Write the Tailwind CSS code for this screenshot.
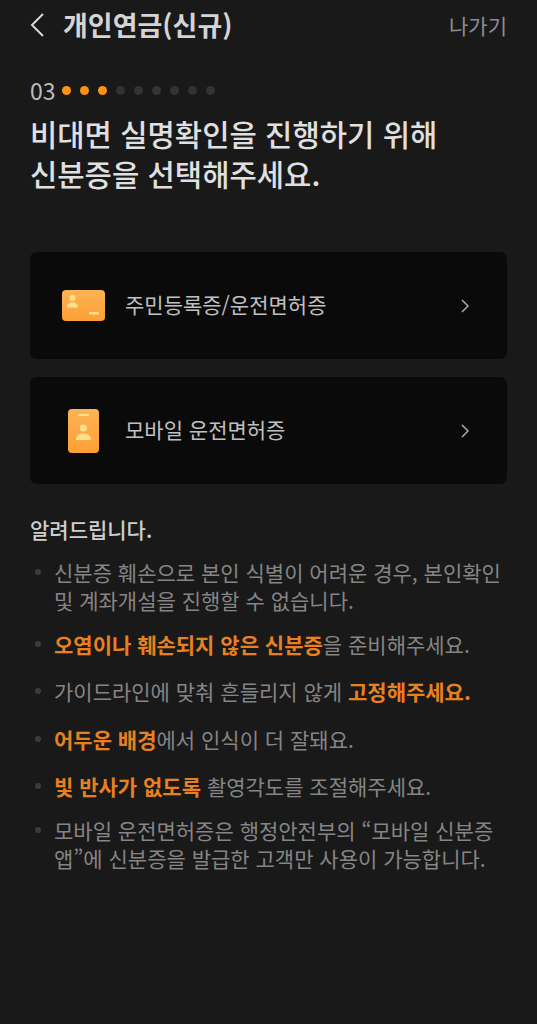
<!DOCTYPE html>
<html lang="ko">
<head>
  <meta charset="UTF-8">
  <meta name="viewport" content="width=device-width, initial-scale=1.0">
  <title>개인연금(신규)</title>
  <script src="https://cdn.jsdelivr.net/npm/@tailwindcss/browser@4"></script>
</head>
<body class="bg-[#191919] font-['Noto_Sans_CJK_KR','Noto_Sans',sans-serif]">
  <div class="w-[537px] h-[1024px] overflow-hidden px-[30px]">

    <!-- header -->
    <header class="h-[50px] flex items-center justify-between">
      <div class="flex items-center">
        <svg class="w-[14px] h-[26px]" viewBox="0 0 14 26" fill="none" stroke="#d8d8d8" stroke-width="2"><path d="M13 2 2 13l11 11"/></svg>
        <h1 class="ml-[19px] text-[27px] font-bold text-[#d4d4d4] leading-[32px]">개인연금(신규)</h1>
      </div>
      <a class="text-[21px] text-[#8e8e8e] leading-[28px]">나가기</a>
    </header>

    <!-- step -->
    <div class="mt-[26px] h-[28px] flex items-center">
      <span class="text-[23px] text-[#bdbdbd] leading-[28px] w-[31px]">03</span>
      <div class="flex gap-[9px] ml-[1px]">
        <i class="w-[9px] h-[9px] rounded-full bg-[#fb9313]"></i>
        <i class="w-[9px] h-[9px] rounded-full bg-[#fb9313]"></i>
        <i class="w-[9px] h-[9px] rounded-full bg-[#fb9313]"></i>
        <i class="w-[9px] h-[9px] rounded-full bg-[#333333]"></i>
        <i class="w-[9px] h-[9px] rounded-full bg-[#333333]"></i>
        <i class="w-[9px] h-[9px] rounded-full bg-[#333333]"></i>
        <i class="w-[9px] h-[9px] rounded-full bg-[#333333]"></i>
        <i class="w-[9px] h-[9px] rounded-full bg-[#333333]"></i>
        <i class="w-[9px] h-[9px] rounded-full bg-[#333333]"></i>
      </div>
    </div>
    <h2 class="mt-[10px] text-[29.7px] font-medium text-[#e0e0e0] leading-[40px]">비대면 실명확인을 진행하기 위해<br>신분증을 선택해주세요.</h2>

    <!-- id options -->
    <div class="mt-[58px] flex flex-col gap-[18px]">
      <button class="h-[107px] w-full rounded-[7px] bg-[#0a0a0a] flex items-center pl-[32px] pr-[37px]">
        <svg class="w-[43px] h-[31px] shrink-0" viewBox="0 0 43 31">
          <defs>
            <linearGradient id="cardFill" x1="0" y1="0" x2="0" y2="1"><stop offset="0" stop-color="#fdb455"/><stop offset="1" stop-color="#fd9f35"/></linearGradient>
          </defs>
          <rect width="43" height="31" rx="4" fill="url(#cardFill)"/>
          <circle cx="10.500" cy="8" r="3" fill="#fde08f"/>
          <path d="M5 17.500c0-3.500 2.500-5 5.500-5s5.500 1.500 5.500 5z" fill="#fde08f"/>
          <rect x="27" y="22" width="10" height="2.500" rx="1" fill="#fde08f"/>
        </svg>
        <span class="ml-[20px] mb-[4px] text-[21px] text-[#c0c0c0] leading-[30px]">주민등록증/운전면허증</span>
        <svg class="ml-auto w-[9px] h-[14px]" viewBox="0 0 9 14" fill="none" stroke="#a8a8a8" stroke-width="1.500"><path d="m1 1 6 6-6 6"/></svg>
      </button>
      <button class="h-[107px] w-full rounded-[7px] bg-[#0a0a0a] flex items-center pl-[38px] pr-[37px]">
        <svg class="w-[31px] h-[44px] shrink-0" viewBox="0 0 31 44">
          <defs>
            <linearGradient id="phoneFill" x1="0" y1="0" x2="0" y2="1"><stop offset="0" stop-color="#fdb455"/><stop offset="1" stop-color="#fd9f35"/></linearGradient>
          </defs>
          <rect width="31" height="44" rx="4" fill="url(#phoneFill)"/>
          <rect x="10" y="5" width="11" height="2" rx="1" fill="#fde08f"/>
          <circle cx="15.500" cy="19" r="3.600" fill="#fde08f"/>
          <path d="M8 31c0-4.500 3.500-6.500 7.500-6.500S23 26.500 23 31z" fill="#fde08f"/>
        </svg>
        <span class="ml-[26px] mb-[4px] text-[21px] text-[#c0c0c0] leading-[30px]">모바일 운전면허증</span>
        <svg class="ml-auto w-[9px] h-[14px]" viewBox="0 0 9 14" fill="none" stroke="#a8a8a8" stroke-width="1.500"><path d="m1 1 6 6-6 6"/></svg>
      </button>
    </div>

    <!-- notice -->
    <h3 class="mt-[30px] text-[21px] font-medium text-[#cfcfcf] leading-[30px]">알려드립니다.</h3>
    <ul class="mt-[14px] flex flex-col gap-[11.5px] text-[21px] text-[#858585]">
      <li class="relative pl-[24px] leading-[28px]"><i class="absolute left-[5px] top-[11px] w-[6px] h-[6px] rounded-full bg-[#3c3c3c]"></i>신분증 훼손으로 본인 식별이 어려운 경우, 본인확인 및 계좌개설을 진행할 수 없습니다.</li>
      <li class="relative pl-[24px] leading-[36px]"><i class="absolute left-[5px] top-[15px] w-[6px] h-[6px] rounded-full bg-[#3c3c3c]"></i><b class="font-bold text-[#e8801f]">오염이나 훼손되지 않은 신분증</b>을 준비해주세요.</li>
      <li class="relative pl-[24px] leading-[36px]"><i class="absolute left-[5px] top-[15px] w-[6px] h-[6px] rounded-full bg-[#3c3c3c]"></i>가이드라인에 맞춰 흔들리지 않게 <b class="font-bold text-[#e8801f]">고정해주세요.</b></li>
      <li class="relative pl-[24px] leading-[36px]"><i class="absolute left-[5px] top-[15px] w-[6px] h-[6px] rounded-full bg-[#3c3c3c]"></i><b class="font-bold text-[#e8801f]">어두운 배경</b>에서 인식이 더 잘돼요.</li>
      <li class="relative pl-[24px] leading-[36px]"><i class="absolute left-[5px] top-[15px] w-[6px] h-[6px] rounded-full bg-[#3c3c3c]"></i><b class="font-bold text-[#e8801f]">빛 반사가 없도록</b> 촬영각도를 조절해주세요.</li>
      <li class="relative pl-[24px] leading-[28px]"><i class="absolute left-[5px] top-[11px] w-[6px] h-[6px] rounded-full bg-[#3c3c3c]"></i>모바일 운전면허증은 행정안전부의 “모바일 신분증 앱”에 신분증을 발급한 고객만 사용이 가능합니다.</li>
    </ul>
  </div>
</body>
</html>
